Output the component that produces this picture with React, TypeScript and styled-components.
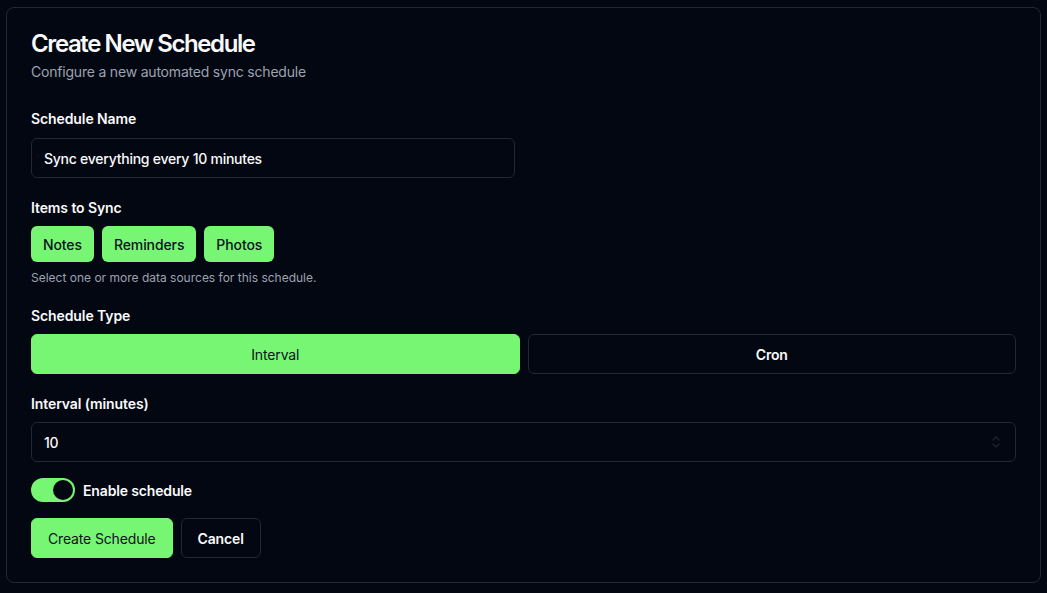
import { useState } from "react";
import styled, { createGlobalStyle } from "styled-components";

const colors = {
  bg: "#030712",
  border: "#1f2937",
  text: "#f9fafb",
  muted: "#9ca3af",
  green: "#77f674",
  onGreen: "#0b1220",
};

const GlobalStyle = createGlobalStyle`
  * { box-sizing: border-box; }
  html, body {
    margin: 0;
    background: ${colors.bg};
    color: ${colors.text};
    font-family: Inter, "Noto Sans", "Liberation Sans", sans-serif;
  }
  #root { padding: 7px 6px 10px 6px; }
`;

const Card = styled.section`
  border: 1px solid ${colors.border};
  border-radius: 8px;
  background: ${colors.bg};
  padding: 24px;
`;

const Header = styled.header`
  display: flex;
  flex-direction: column;
  gap: 6px;
  margin-bottom: 27px;
`;

const Title = styled.h1`
  margin: 0;
  font-size: 24px;
  line-height: 24px;
  font-weight: 600;
  letter-spacing: -1.4px;
`;

const Subtitle = styled.p`
  margin: 0;
  font-size: 14px;
  line-height: 20px;
  color: ${colors.muted};
  letter-spacing: -0.2px;
`;

const Form = styled.form`
  display: flex;
  flex-direction: column;
  gap: 16px;
`;

const Field = styled.div<{ $after?: number }>`
  display: flex;
  flex-direction: column;
  gap: 8px;
  padding-bottom: ${(p) => p.$after ?? 0}px;
`;

const Label = styled.label<{ $gap?: number }>`
  font-size: 14px;
  line-height: 20px;
  font-weight: 600;
  letter-spacing: -0.1px;
  margin-bottom: ${(p) => p.$gap ?? 0}px;
`;

const InputWrap = styled.div<{ $max?: number }>`
  position: relative;
  width: 100%;
  max-width: ${(p) => (p.$max ? `${p.$max}px` : "none")};
`;

const TextInput = styled.input`
  width: 100%;
  height: 40px;
  padding: 0 12px;
  border: 1px solid ${colors.border};
  border-radius: 6px;
  background: ${colors.bg};
  color: ${colors.text};
  font-family: inherit;
  font-size: 14px;
  font-weight: 500;
  letter-spacing: -0.25px;
  outline: none;
  appearance: textfield;
  &::-webkit-inner-spin-button,
  &::-webkit-outer-spin-button {
    -webkit-appearance: none;
    margin: 0;
  }
`;

const Spinner = styled.svg`
  position: absolute;
  right: 15px;
  top: 13px;
  pointer-events: none;
`;

const ChipRow = styled.div`
  display: flex;
  gap: 8px;
`;

const Chip = styled.button`
  height: 36px;
  padding: 0 12px;
  border: none;
  border-radius: 6px;
  background: ${colors.green};
  color: ${colors.onGreen};
  font-family: inherit;
  font-size: 14px;
  font-weight: 500;
  letter-spacing: -0.1px;
`;

const Helper = styled.p`
  margin: 0;
  font-size: 12px;
  line-height: 16px;
  color: ${colors.muted};
`;

const Segments = styled.div`
  display: grid;
  grid-template-columns: 1fr 1fr;
  gap: 8px;
`;

const Button = styled.button<{ $active?: boolean }>`
  height: 40px;
  padding: 0 16px;
  border-radius: 6px;
  font-family: inherit;
  font-size: 14px;
  letter-spacing: -0.15px;
  font-weight: ${(p) => (p.$active ? 400 : 600)};
  border: 1px solid ${(p) => (p.$active ? colors.green : colors.border)};
  background: ${(p) => (p.$active ? colors.green : colors.bg)};
  color: ${(p) => (p.$active ? colors.onGreen : colors.text)};
`;

const ToggleRow = styled.div`
  display: flex;
  align-items: center;
  gap: 8px;
`;

const Track = styled.button<{ $on: boolean }>`
  position: relative;
  width: 44px;
  height: 24px;
  padding: 0;
  border: 2px solid transparent;
  border-radius: 12px;
  background: ${(p) => (p.$on ? colors.green : colors.border)};
`;

const Thumb = styled.span<{ $on: boolean }>`
  position: absolute;
  top: 0;
  left: ${(p) => (p.$on ? 20 : 0)}px;
  width: 20px;
  height: 20px;
  border-radius: 50%;
  background: ${colors.bg};
`;

const ToggleLabel = styled.span`
  font-size: 14px;
  font-weight: 600;
  letter-spacing: -0.15px;
`;

const Actions = styled.div`
  display: flex;
  gap: 8px;
`;

export default function App() {
  const [enabled, setEnabled] = useState(true);
  const [type, setType] = useState<"interval" | "cron">("interval");

  return (
    <>
      <GlobalStyle />
      <Card>
        <Header>
          <Title>Create New Schedule</Title>
          <Subtitle>Configure a new automated sync schedule</Subtitle>
        </Header>
        <Form onSubmit={(e) => e.preventDefault()}>
          <Field $after={4}>
            <Label $gap={1}>Schedule Name</Label>
            <InputWrap $max={484}>
              <TextInput defaultValue="Sync everything every 10 minutes" />
            </InputWrap>
          </Field>

          <Field $after={4}>
            <Label>Items to Sync</Label>
            <ChipRow>
              <Chip type="button">Notes</Chip>
              <Chip type="button">Reminders</Chip>
              <Chip type="button">Photos</Chip>
            </ChipRow>
            <Helper>Select one or more data sources for this schedule.</Helper>
          </Field>

          <Field $after={4}>
            <Label>Schedule Type</Label>
            <Segments>
              <Button
                type="button"
                $active={type === "interval"}
                onClick={() => setType("interval")}
              >
                Interval
              </Button>
              <Button
                type="button"
                $active={type === "cron"}
                onClick={() => setType("cron")}
              >
                Cron
              </Button>
            </Segments>
          </Field>

          <Field>
            <Label>Interval (minutes)</Label>
            <InputWrap>
              <TextInput type="number" defaultValue={10} />
              <Spinner width="10" height="14" viewBox="0 0 10 14" fill="none">
                <path
                  d="M2 5l3-3 3 3M2 9l3 3 3-3"
                  stroke="#1a2230"
                  strokeWidth="1.4"
                  strokeLinecap="round"
                  strokeLinejoin="round"
                />
              </Spinner>
            </InputWrap>
          </Field>

          <ToggleRow>
            <Track
              type="button"
              $on={enabled}
              onClick={() => setEnabled(!enabled)}
            >
              <Thumb $on={enabled} />
            </Track>
            <ToggleLabel>Enable schedule</ToggleLabel>
          </ToggleRow>

          <Actions>
            <Button type="submit" $active>
              Create Schedule
            </Button>
            <Button type="button">Cancel</Button>
          </Actions>
        </Form>
      </Card>
    </>
  );
}
